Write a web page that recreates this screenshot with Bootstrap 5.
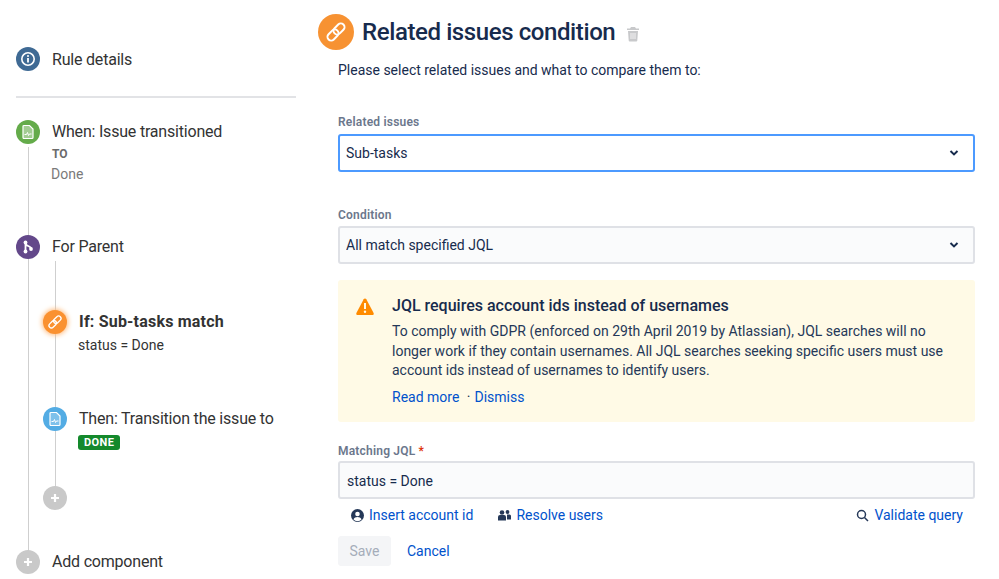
<!DOCTYPE html>
<html lang="en">
  <head>
    <meta charset="UTF-8" />
    <meta name="viewport" content="width=device-width, initial-scale=1.0" />
    <title>Related issues condition</title>
    <link href="https://cdn.jsdelivr.net/npm/bootstrap@5.3.0/dist/css/bootstrap.min.css" rel="stylesheet" />
    <style>
      body {
        font-family: Roboto, "Liberation Sans", sans-serif;
        font-size: 14px;
        color: #172b4d;
        background: #fff;
        overflow: hidden;
        height: 579px;
      }
      a { color: #0052cc; text-decoration: none; }

      /* left rule tree */
      .tree { width: 297px; margin-left: 16px; color: #253858; flex-shrink: 0; }
      .tree-title { font-size: 16px; line-height: 24px; color: #333; letter-spacing: -0.2px; }
      .tree-strong { font-weight: 700; letter-spacing: 0.2px; }
      .step-dot {
        width: 24px; height: 24px; border-radius: 50%;
        display: flex; align-items: center; justify-content: center;
        flex-shrink: 0; color: #fff;
      }
      .step-info { height: 24px; margin-top: 47px; }
      .step-info .tree-title { padding-top: 1px; }
      .tree-rule { height: 2px; width: 280px; background: #e2e3e6; margin: 25px 0 22px; opacity: 1; border: 0; }
      .rail { margin-left: 12px; border-left: 1px solid #cfcfcf; height: 412px; }
      .rail-step { margin-left: -13px; }
      .rail-inner { margin-left: 26px; margin-top: 2px; border-left: 1px solid #cfcfcf; height: 227px; padding-top: 49px; }
      .rail-inner .rail-step { margin-left: -13px; }
      .tree-to { font-size: 12px; font-weight: 700; color: #6b6b6b; line-height: 14px; margin-top: 3px; margin-left: 23px; }
      .tree-done { font-size: 14px; color: #7a7a7a; line-height: 20px; margin-top: 3px; margin-left: 22px; }
      .tree-sub { font-size: 14px; line-height: 18px; margin-top: 2px; margin-left: 22px; color: #333; }
      .dot-green { background: #64ab4a; }
      .dot-purple { background: #63488a; }
      .dot-orange { background: #fa9130; box-shadow: 0 0 5px 1px #ffb877; }
      .dot-blue { background: #53ace4; }
      .dot-grey { background: #c9c9c9; }
      .dot-slate { background: #3f6a94; }
      .gap-then { margin-top: 53px; }
      .gap-plus { margin-top: 34px; }
      .gap-add { margin-top: 62px; }
      .done-tag {
        font-size: 11px; font-weight: 700; letter-spacing: 0.4px; line-height: 13px;
        background: #14892c; color: #fff; border-radius: 3px; padding: 1px 6px;
        margin-left: 22px; margin-top: 4px; display: inline-block; vertical-align: top;
      }

      /* right form */
      .form-side { margin-left: 5px; width: 657px; }
      .head-dot {
        width: 36px; height: 36px; border-radius: 50%; background: #f79232;
        display: flex; align-items: center; justify-content: center; flex-shrink: 0;
      }
      .head-title { font-size: 24px; font-weight: 500; line-height: 36px; letter-spacing: -0.4px; color: #172b4d; margin: 0; }
      .trash-mark { margin-left: 11px; margin-top: 3px; }
      .form-body { margin-left: 20px; }
      .form-lead { line-height: 20px; margin: 10px 0 0; }
      .field-label { font-size: 12px; font-weight: 600; letter-spacing: 0.2px; line-height: 16px; color: #6b778c; display: block; }
      .label-first { margin-top: 34px; margin-bottom: 4px; }
      .label-second { margin-top: 35px; margin-bottom: 3px; }
      .label-third { margin-bottom: 2px; }
      .req { color: #de350b; }
      .form-select.jira-input, .form-control.jira-input {
        height: 38px; border: 2px solid #dfe1e6; border-radius: 3px;
        background-color: #fafbfc; color: #172b4d; font-size: 14px;
        padding: 0 30px 0 6px; box-shadow: none;
      }
      .form-select.jira-input {
        background-image: url("data:image/svg+xml,%3Csvg xmlns='http://www.w3.org/2000/svg' viewBox='0 0 10 8'%3E%3Cpath d='M1.5 2 5 5.4 8.5 2' fill='none' stroke='%23172b4d' stroke-width='2'/%3E%3C/svg%3E");
        background-size: 10px 8px; background-position: right 14px center;
      }
      .form-select.is-focus { border-color: #4c9aff; background-color: #fff; }
      .form-control.jira-input { padding-left: 7px; padding-top: 1px; }
      .notice {
        background: #fffae6; border: 0; border-radius: 3px; color: #172b4d;
        padding: 16px 16px 14px 16px; margin: 16px 0 21px; height: 142px;
      }
      .notice-mark { width: 22px; margin: 0 16px 0 0; flex-shrink: 0; }
      .notice-title { font-size: 16px; font-weight: 500; line-height: 20px; margin: 0 0 6px; color: #172b4d; }
      .notice-text { line-height: 19.5px; margin: 0 0 6px; color: #253858; }
      .tool-row { line-height: 20px; margin-top: 6px; padding: 0 12px 0 13px; }
      .tool-icon { color: #253858; margin-right: 5px; }
      .save-btn {
        --bs-btn-disabled-opacity: 1;
        --bs-btn-disabled-bg: #f4f5f7; --bs-btn-disabled-border-color: #f4f5f7; --bs-btn-disabled-color: #a5adba;
        font-size: 14px; height: 30px; width: 53px; padding: 0; border-radius: 3px;
      }
      .cancel-link { margin-left: 16px; }
    </style>
  </head>

  <body>
    <div class="d-flex">
      <!-- Rule tree -->
      <div class="tree">
        <div class="d-flex align-items-center step-info">
          <span class="step-dot dot-slate">
            <svg width="16" height="16" viewBox="0 0 16 16" fill="none" stroke="#fff"><circle cx="8" cy="8" r="6.2" stroke-width="1.6"/><path d="M8 7v4.4" stroke-width="1.8"/><circle cx="8" cy="4.9" r="1" fill="#fff" stroke="none"/></svg>
          </span>
          <span class="tree-title" style="margin-left:12px">Rule details</span>
        </div>
        <hr class="tree-rule" />
        <div class="d-flex align-items-center">
          <span class="step-dot dot-green">
            <svg width="14" height="16" viewBox="0 0 14 16"><path d="M3 1.500h5.500L12 5v8.500a1 1 0 0 1-1 1H3a1 1 0 0 1-1-1v-11a1 1 0 0 1 1-1z" fill="#fff" fill-opacity=".4" stroke="#fff" stroke-width="1.200"/><path d="M3.500 10.500h2l1-2 1 3 1-1.500h2" fill="none" stroke="#fff" stroke-width="1"/></svg>
          </span>
          <span class="tree-title" style="margin-left:12px">When: Issue transitioned</span>
        </div>
        <div class="rail">
          <div class="tree-to">TO</div>
          <div class="tree-done">Done</div>
          <div class="rail-step d-flex align-items-center" style="margin-top:51px">
            <span class="step-dot dot-purple">
              <svg width="14" height="14" viewBox="0 0 14 14" fill="none" stroke="#fff" stroke-width="1.800"><path d="M4.500 3v8M4.500 3c0 4 5.500 2 5.500 6"/><circle cx="4.500" cy="2.500" r="1.900" fill="#fff" stroke="none"/><circle cx="4.500" cy="11.500" r="1.900" fill="#fff" stroke="none"/><circle cx="10" cy="9" r="1.900" fill="#fff" stroke="none"/></svg>
            </span>
            <span class="tree-title" style="margin-left:12px">For Parent</span>
          </div>
          <div class="rail-inner">
            <div class="rail-step d-flex align-items-center">
              <span class="step-dot dot-orange">
                <svg width="16" height="16" viewBox="0 0 16 16" fill="none" stroke="#fff" stroke-width="1.300"><g transform="rotate(-45 8 8)"><rect x="0.500" y="5.600" width="8.500" height="4.800" rx="2.400"/><rect x="7" y="5.600" width="8.500" height="4.800" rx="2.400"/></g></svg>
              </span>
              <strong class="tree-title tree-strong" style="margin-left:12px">If: Sub-tasks match</strong>
            </div>
            <div class="tree-sub">status = Done</div>
            <div class="rail-step d-flex align-items-center gap-then">
              <span class="step-dot dot-blue">
                <svg width="14" height="16" viewBox="0 0 14 16"><path d="M3 1.500h5.500L12 5v8.500a1 1 0 0 1-1 1H3a1 1 0 0 1-1-1v-11a1 1 0 0 1 1-1z" fill="#fff" fill-opacity=".25" stroke="#fff" stroke-width="1.200"/><path d="M3.500 10.500h2l1-2 1 3 1-1.500h2" fill="none" stroke="#fff" stroke-width="1"/></svg>
              </span>
              <span class="tree-title" style="margin-left:12px">Then: Transition the issue to</span>
            </div>
            <span class="badge done-tag">DONE</span>
            <div class="rail-step gap-plus">
              <span class="step-dot dot-grey">
                <svg width="12" height="12" viewBox="0 0 12 12"><path d="M6 2v8M2 6h8" stroke="#fff" stroke-width="2.200"/></svg>
              </span>
            </div>
          </div>
          <div class="rail-step d-flex align-items-center gap-add">
            <span class="step-dot dot-grey">
              <svg width="12" height="12" viewBox="0 0 12 12"><path d="M6 2v8M2 6h8" stroke="#fff" stroke-width="2.200"/></svg>
            </span>
            <span class="tree-title" style="margin-left:12px">Add component</span>
          </div>
        </div>
      </div>

      <!-- Condition form -->
      <div class="form-side">
        <div class="d-flex align-items-center" style="margin-top:14px">
          <span class="head-dot">
            <svg width="24" height="24" viewBox="0 0 24 24" fill="none" stroke="#fff" stroke-width="2"><g transform="rotate(-45 12 12)"><rect x="1.500" y="8.300" width="12.500" height="7.400" rx="3.700"/><rect x="10" y="8.300" width="12.500" height="7.400" rx="3.700"/></g></svg>
          </span>
          <h1 class="head-title ms-2">Related issues condition</h1>
          <svg class="trash-mark" width="14" height="16" viewBox="0 0 14 16" fill="#c8c9cb"><path d="M5 1h4l1 1.500h3V4H1V2.500h3zM2 5h10l-.7 9.500a1 1 0 0 1-1 .9H3.700a1 1 0 0 1-1-.9z"/><path d="M5 7v6M7 7v6M9 7v6" stroke="#fff" stroke-width=".8"/></svg>
        </div>
        <div class="form-body">
          <p class="form-lead">Please select related issues and what to compare them to:</p>

          <label class="field-label label-first" for="relatedSel">Related issues</label>
          <select id="relatedSel" class="form-select jira-input is-focus"><option>Sub-tasks</option></select>

          <label class="field-label label-second" for="condSel">Condition</label>
          <select id="condSel" class="form-select jira-input"><option>All match specified JQL</option></select>

          <div class="alert notice d-flex" role="alert">
            <span class="notice-mark">
              <svg width="22" height="20" viewBox="0 0 22 20"><path d="M11 1.500c.6 0 1 .3 1.300.8l7.300 13.600c.5 1-.2 2.100-1.300 2.100H3.700c-1.100 0-1.800-1.100-1.300-2.100L9.700 2.300c.3-.5.700-.8 1.300-.8z" fill="#ff8b00"/><path d="M11 6v6" stroke="#fffae6" stroke-width="2"/><circle cx="11" cy="14.700" r="1.200" fill="#fffae6"/></svg>
            </span>
            <div>
              <h2 class="notice-title">JQL requires account ids instead of usernames</h2>
              <p class="notice-text">To comply with GDPR (enforced on 29th April 2019 by Atlassian), JQL searches will no longer work if they contain usernames. All JQL searches seeking specific users must use account ids instead of usernames to identify users.</p>
              <div><a href="#">Read more</a> <span class="mx-1">·</span><a href="#">Dismiss</a></div>
            </div>
          </div>

          <label class="field-label label-third" for="jqlInput">Matching JQL <span class="req">*</span></label>
          <input id="jqlInput" class="form-control jira-input" value="status = Done" />

          <div class="tool-row d-flex">
            <a href="#" class="d-flex align-items-center">
              <svg class="tool-icon" width="13" height="13" viewBox="0 0 13 13"><circle cx="6.500" cy="6.500" r="6.500" fill="#253858"/><circle cx="6.500" cy="5" r="2.300" fill="#fff"/><path d="M2.500 10.600c.7-1.800 2.300-2.500 4-2.500s3.300.7 4 2.500a5.500 5.500 0 0 1-8 0z" fill="#fff"/></svg>
              Insert account id
            </a>
            <a href="#" class="d-flex align-items-center" style="margin-left:25px">
              <svg class="tool-icon" width="13" height="12" viewBox="0 0 13 12" fill="#253858"><circle cx="4" cy="3.500" r="2.300"/><circle cx="9.500" cy="3" r="1.900"/><path d="M0 8a2 2 0 0 1 2-2h4a2 2 0 0 1 2 2v3.500H0zM9 5.500h2.500a1.500 1.500 0 0 1 1.500 1.500v3.500H9z"/></svg>
              Resolve users
            </a>
            <a href="#" class="d-flex align-items-center ms-auto">
              <svg class="tool-icon" width="13" height="13" viewBox="0 0 13 13" fill="none" stroke="#253858" stroke-width="1.500"><circle cx="5.500" cy="5.500" r="4"/><path d="M8.500 8.500l3.500 3.500"/></svg>
              Validate query
            </a>
          </div>

          <div class="d-flex align-items-center" style="margin-top:11px">
            <button class="btn save-btn" disabled>Save</button>
            <a href="#" class="cancel-link">Cancel</a>
          </div>
        </div>
      </div>
    </div>
  </body>
</html>
